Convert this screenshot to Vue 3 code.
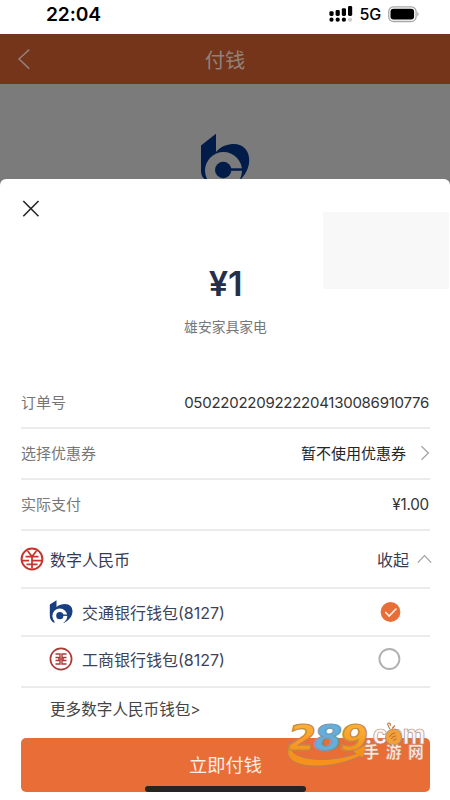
<script setup>
import { ref } from 'vue'

const selected = ref(0)
const wallets = [
  { name: '交通银行钱包(8127)', bank: 'bocom' },
  { name: '工商银行钱包(8127)', bank: 'icbc' },
]
</script>

<template>
  <div class="screen">
    <div class="status">
      <span class="time">22:04</span>
      <div class="indicators">
        <svg class="signal" width="24" height="18" viewBox="0 0 24 18">
          <g fill="#000">
            <rect x="0.4" y="6.2" width="4.2" height="4.8" rx="1.4" />
            <rect x="6.6" y="5" width="4.2" height="6" rx="1.4" />
            <rect x="12.8" y="3.2" width="4.2" height="7.8" rx="1.4" />
            <rect x="19" y="1" width="4.2" height="10" rx="1.4" />
            <circle cx="2.5" cy="14.7" r="2.1" />
            <circle cx="8.7" cy="14.7" r="2.1" />
            <circle cx="14.9" cy="14.7" r="2.1" />
          </g>
          <circle cx="21.1" cy="14.7" r="2" fill="#ccc" />
        </svg>
        <span class="network">5G</span>
        <svg class="battery" width="32" height="17" viewBox="0 0 32 17">
          <rect x="0.7" y="0.9" width="27.4" height="14.6" rx="4.8" fill="#fff" stroke="#a8a8a8" stroke-width="1.3" />
          <rect x="2.5" y="2.8" width="23.6" height="10.8" rx="3" fill="#000" />
          <path d="M29.4 5.8q2.4 2.4 0 4.8z" fill="#a0a0a0" />
        </svg>
      </div>
    </div>
    <header class="nav">
      <svg class="back" width="14" height="22" viewBox="0 0 14 22">
        <path d="M12.2 1.6 2 11l10.2 9.6" fill="none" stroke="#92817a" stroke-width="1.5" />
      </svg>
      <span>付钱</span>
    </header>
    <div class="backdrop">
      <svg width="50" height="46" viewBox="201 134 50 46">
        <path d="M201 145.5 216 133.7V152C221 146 228 144 234 144c9 0 15.2 6.5 15.2 16 0 8-3.5 14-9 20H206c-3.5-2-5-5-5-10z" fill="#021c49" />
        <circle cx="223.5" cy="170.5" r="18.5" fill="#7b7b7b" />
        <circle cx="223.2" cy="170" r="8.2" fill="#021c49" />
        <path d="M229 168.300h14v2.500h-14z" fill="#021c49" />
      </svg>
    </div>

    <main class="sheet">
      <svg class="close" width="18" height="18" viewBox="0 0 18 18">
        <path d="m1.3 1 15.2 15.2M16.500 1 1.300 16.200" fill="none" stroke="#252525" stroke-width="1.6" />
      </svg>
      <div class="placeholder"></div>
      <div class="summary">
        <div class="amount">¥1</div>
        <div class="merchant">雄安家具家电</div>
      </div>
      <div class="details">
        <div class="row">
          <span class="label">订单号</span>
          <span class="order">0502202209222204130086910776</span>
        </div>
        <div class="row">
          <span class="label">选择优惠券</span>
          <span class="coupon">暂不使用优惠券
            <svg width="10" height="16" viewBox="0 0 10 16"><path d="m1.500 1.200 6.900 6.800-6.900 6.800" fill="none" stroke="#a5a5a5" stroke-width="1.3" /></svg>
          </span>
        </div>
        <div class="row">
          <span class="label">实际支付</span>
          <span class="paid">¥1.00</span>
        </div>
        <div class="row currency">
          <svg class="ecny" width="24" height="24" viewBox="0 0 24 24">
            <g fill="none" stroke="#c5352e">
              <circle cx="12" cy="12" r="10.4" stroke-width="2" />
              <path d="M7.600 4 12 9.500 16.400 4M12 9.500v12M5.500 9.700h13M2 13.500h7M12 13.500h10.500M6.500 17.300h11" stroke-width="1.75" />
            </g>
          </svg>
          <span class="currency-name">数字人民币</span>
          <span class="collapse">收起
            <svg width="15" height="10" viewBox="0 0 15 10"><path d="m.8 8.600 6.700-7 6.700 7" fill="none" stroke="#a0a0a0" stroke-width="1.2" /></svg>
          </span>
        </div>
        <div
          v-for="(wallet, i) in wallets"
          :key="wallet.bank"
          class="row wallet"
          :class="wallet.bank"
          @click="selected = i"
        >
          <svg v-if="wallet.bank === 'bocom'" width="24" height="24" viewBox="0 0 24 24">
            <path d="M.8 4.500 7.500.3V7C10 4.800 13 4 16 4c4.700 0 7.500 3 7.500 7.300 0 5-3.500 8.900-8.500 11.700L5 23C2 20.500.8 18.500.8 15z" fill="#193f80" />
            <circle cx="10.8" cy="16" r="7.500" fill="#fff" />
            <path d="M3 24 6 21l8 .5 1.500 2.500H3z" fill="#fff" />
            <path d="M1.200 17q.8 4.300 5.300 6.300-3.200-2.300-3.300-6.300z" fill="#193f80" />
            <circle cx="10.8" cy="15.700" r="3.600" fill="#193f80" />
            <path d="M13 15.200h7" stroke="#193f80" stroke-width="1.400" />
          </svg>
          <svg v-else width="24" height="24" viewBox="0 0 24 24">
            <g fill="none" stroke="#ad3937">
              <circle cx="12" cy="12" r="10.6" stroke-width="1.7" />
              <path d="M6.500 7H11v3.500H6.500M6.500 17H11v-3.500H6.500M17.500 7H13v3.500h4.500M17.500 17H13v-3.500h4.500" stroke-width="1.400" />
              <path d="M9 12h6" stroke-width="1.600" />
            </g>
          </svg>
          <span>{{ wallet.name }}</span>
          <svg v-if="selected === i" class="radio" width="24" height="24" viewBox="0 0 24 24">
            <circle cx="12.500" cy="12" r="9.9" fill="#e96d36" />
            <path d="m7.300 12 3.800 4 7.300-7.500" fill="none" stroke="#fff2e8" stroke-width="1.6" />
          </svg>
          <svg v-else class="radio" width="24" height="24" viewBox="0 0 24 24">
            <circle cx="11.400" cy="12" r="10" fill="#fff" stroke="#b1b1b1" stroke-width="1.9" />
          </svg>
        </div>
        <div class="more">更多数字人民币钱包&gt;</div>
      </div>
      <button class="pay">立即付钱</button>
    </main>

    <div class="home-bar"></div>
    <svg class="watermark" width="150" height="48" viewBox="0 0 150 48">
      <defs>
        <linearGradient id="gold" x1="0" y1="0" x2="0" y2="1">
          <stop offset="0" stop-color="#ffb83c" />
          <stop offset="1" stop-color="#f38c15" />
        </linearGradient>
      </defs>
      <path d="M5 22C-2 37 31 46 70 34l-3-3 14-7-4 14-3-2C42 52-12 50 5 22z" fill="#f6921c" stroke="#ae8060" stroke-width=".8" />
      <g class="digits">
        <text x="2" y="29.500" textLength="28" lengthAdjust="spacingAndGlyphs">2</text>
        <text class="blue" x="28" y="29.500" textLength="28" lengthAdjust="spacingAndGlyphs">8</text>
        <text x="54" y="29.500" textLength="28" lengthAdjust="spacingAndGlyphs">9</text>
      </g>
      <text class="domain" x="78.500" y="24" textLength="61" lengthAdjust="spacingAndGlyphs">.com</text>
      <circle cx="107.500" cy="17" r="8" fill="#f4a238" stroke="#a98a76" stroke-width=".8" />
      <path d="M103.500 17q2-4 6-4M105.500 19q1-3 5-3M107.500 21q1-2 3-2M104 9q-4-6-1-6 2 0 1 3M106 8.500l3-3" fill="none" stroke="#bb743a" stroke-width="1.100" />
      <text class="site" x="77.500" y="38.300">手游网</text>
    </svg>
  </div>
</template>

<style>
body { margin: 0; }
</style>

<style scoped>
* { box-sizing: border-box; }
svg { display: block; flex: none; }
.screen {
  position: relative;
  width: 450px;
  height: 800px;
  overflow: hidden;
  display: flex;
  flex-direction: column;
  background: #7b7b7b;
  color: #333;
  font-family: Inter, "Noto Sans CJK SC", sans-serif;
}
.status {
  height: 34px;
  flex: none;
  background: #fff;
  display: flex;
  justify-content: space-between;
  padding: 0 30px 0 46px;
  color: #000;
}
.time { font-size: 19.2px; line-height: 28px; font-weight: 600; letter-spacing: -.1px; }
.indicators { display: flex; align-items: center; height: 28px; }
.network { font-size: 16px; font-weight: 500; margin: 0 7px 0 7px; letter-spacing: -.2px; }
.nav {
  height: 50px;
  flex: none;
  display: grid;
  grid-template-columns: 80px 1fr 80px;
  align-items: center;
  background: #75351b;
  color: #92817a;
  font-size: 20.3px;
  text-align: center;
}
.back { margin-left: 17px; }
.backdrop { height: 96px; flex: none; display: flex; align-items: flex-end; padding-left: 201px; }
.sheet {
  position: relative;
  height: 621px;
  flex: none;
  margin-top: -1px;
  background: #fff;
  border-radius: 6px 6px 0 0;
  padding: 21px 20px 0 21px;
}
.close { margin-left: 1px; }
.placeholder { position: absolute; top: 33px; right: 1px; width: 126px; height: 77px; background: #f8f8f8; }
.summary { height: 159px; padding-top: 44px; text-align: center; }
.amount { font-size: 34.5px; line-height: 44px; font-weight: 600; color: #242f49; letter-spacing: -.3px; }
.merchant { margin-top: 10px; font-size: 13.8px; line-height: 22px; color: #777; }
.row {
  height: 51px;
  display: flex;
  align-items: center;
  justify-content: space-between;
  padding-bottom: 2px;
  border-bottom: 2px solid #ebebeb;
  font-size: 15px;
}
.row:first-child { height: 52px; }
.label { color: #777; }
.order { font-size: 15px; letter-spacing: -.26px; margin-right: 1px; padding-top: 2px; }
.coupon, .collapse { display: flex; align-items: center; gap: 14px; }
.coupon { color: #252525; margin-right: 0; }
.paid { font-size: 15.2px; letter-spacing: -.2px; margin-right: 1px; padding-top: 2px; }
.row.currency { height: 58px; padding-bottom: 1px; justify-content: flex-start; font-size: 16px; color: #333b55; }
.ecny { margin-left: -1px; }
.currency-name { margin-left: 6px; }
.collapse { margin-left: auto; margin-right: -2px; gap: 8px; }
.row.wallet { height: 48px; padding-bottom: 1px; justify-content: flex-start; padding-left: 28px; font-size: 16px; color: #3b435c; }
.row.wallet.icbc { height: 51px; padding-bottom: 6px; }
.wallet span { margin-left: 9px; }
.wallet .radio { margin-left: auto; margin-right: 28px; }
.more { height: 50px; padding-left: 29px; font-size: 15.6px; line-height: 43px; color: #444; }
.pay {
  display: block;
  width: 409px;
  height: 54px;
  padding: 1px 0 0;
  border: 0;
  border-radius: 5px;
  background: #e96d36;
  color: #fff0e7;
  font: 18.2px/53px Inter, "Noto Sans CJK SC", sans-serif;
}
.home-bar { position: absolute; left: 145px; top: 785.5px; width: 161px; height: 6px; border-radius: 3px; background: #292421; }
.watermark { position: absolute; left: 286px; top: 720px; overflow: visible; }
.digits { font: italic 700 35px "DejaVu Sans", sans-serif; fill: url(#gold); stroke: #c58a45; stroke-width: 1.2px; }
.digits .blue { fill: #65aedb; stroke: #6f9bb0; }
.domain { font: 700 26px Inter, sans-serif; fill: #fff5ed; stroke: #ab8d7e; stroke-width: .7px; }
.site { font: 900 15.8px "Noto Sans CJK SC", sans-serif; letter-spacing: 6.5px; fill: #ffe6d8; stroke: #bc7a5c; stroke-width: .4px; }
</style>
